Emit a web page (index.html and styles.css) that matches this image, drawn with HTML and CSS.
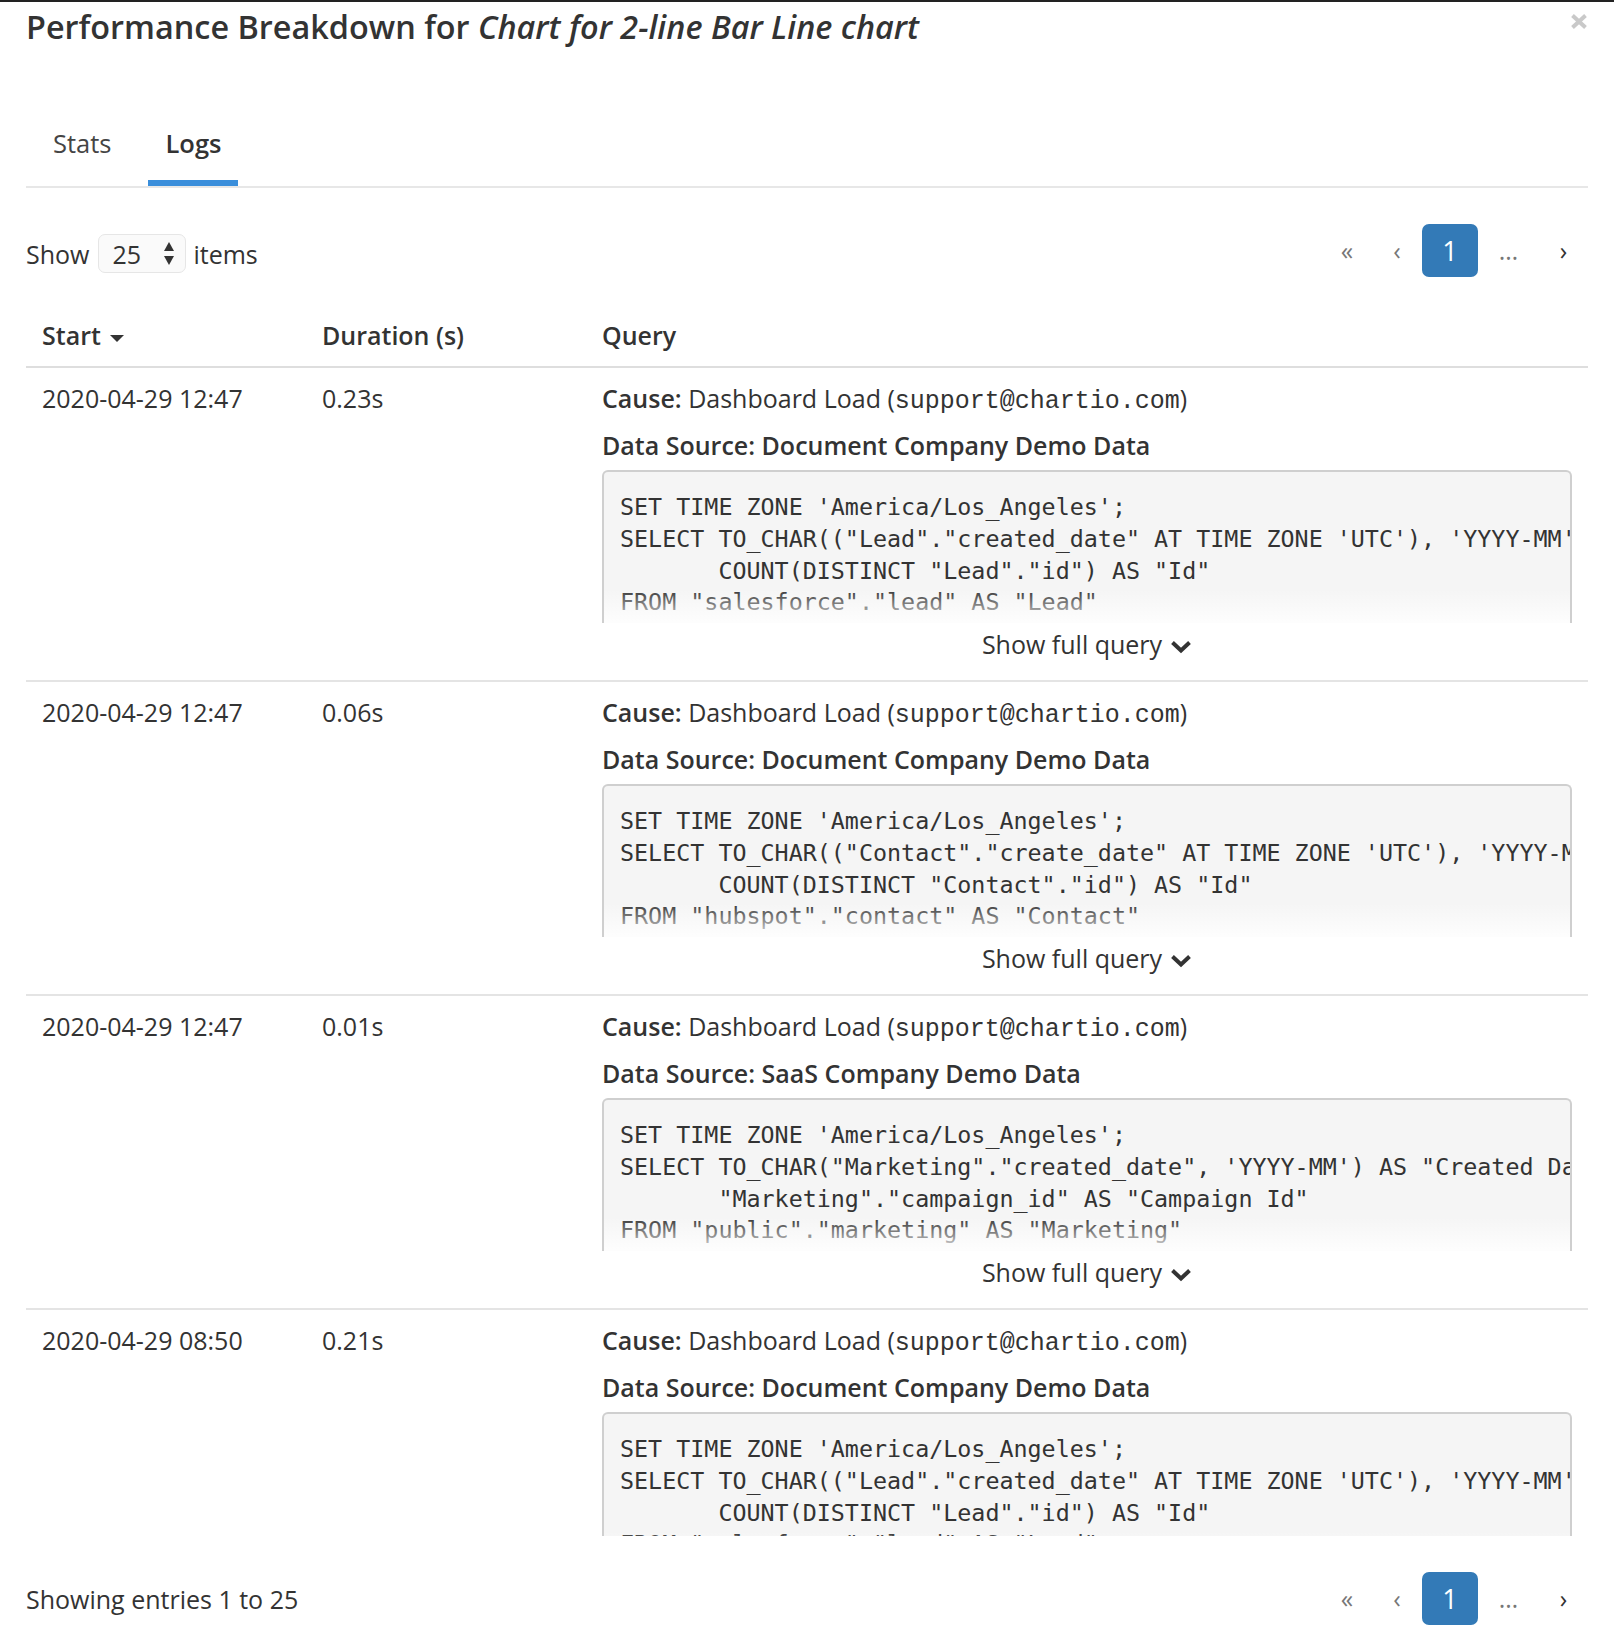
FILE: index.html
```html
<!DOCTYPE html>
<html lang="en">
<head>
<meta charset="utf-8">
<title>Performance Breakdown</title>
<link rel="stylesheet" href="styles.css">
</head>
<body>
<div class="modal">
  <span class="close" aria-label="Close"><svg width="18" height="17" viewBox="0 0 18 17"><path d="M2.5 2.5 L15.5 14.5 M15.5 2.5 L2.5 14.5" stroke="#c9c9c9" stroke-width="4" fill="none"/></svg></span>
  <h1 class="title">Performance Breakdown for <em>Chart for 2-line Bar Line chart</em></h1>

  <ul class="tabs">
    <li class="tab">Stats</li>
    <li class="tab active">Logs</li>
  </ul>

  <div class="toolbar">
    <div class="page-size">Show <span class="select">25<span class="spin"><i class="up"></i><i class="down"></i></span></span> items</div>
    <ul class="pager">
      <li class="muted p-first">&laquo;</li>
      <li class="muted p-prev">&lsaquo;</li>
      <li class="current">1</li>
      <li class="muted p-gap">&hellip;</li>
      <li class="p-next">&rsaquo;</li>
    </ul>
  </div>

  <div class="scroll">
    <table class="logs">
      <colgroup><col class="c-start"><col class="c-dur"><col></colgroup>
      <thead>
        <tr><th>Start <span class="caret"></span></th><th>Duration (s)</th><th>Query</th></tr>
      </thead>
      <tbody>
        <tr>
          <td>2020-04-29 12:47</td>
          <td>0.23s</td>
          <td>
            <div class="cause"><b>Cause:</b> Dashboard Load (<span class="email">support@chartio.com</span>)</div>
            <div class="source">Data Source: Document Company Demo Data</div>
            <div class="code"><pre>SET TIME ZONE 'America/Los_Angeles';
SELECT TO_CHAR(("Lead"."created_date" AT TIME ZONE 'UTC'), 'YYYY-MM') AS "Created Date",
       COUNT(DISTINCT "Lead"."id") AS "Id"
FROM "salesforce"."lead" AS "Lead"
WHERE ("Lead"."created_date" AT TIME ZONE 'UTC') &gt;= '2019-05-01'</pre></div>
            <div class="more">Show full query<svg class="chev" width="22" height="14" viewBox="0 0 22 14"><path d="M2.5 2.5 L11 10.5 L19.5 2.5" stroke="#333" stroke-width="4" fill="none"/></svg></div>
          </td>
        </tr>
        <tr>
          <td>2020-04-29 12:47</td>
          <td>0.06s</td>
          <td>
            <div class="cause"><b>Cause:</b> Dashboard Load (<span class="email">support@chartio.com</span>)</div>
            <div class="source">Data Source: Document Company Demo Data</div>
            <div class="code"><pre>SET TIME ZONE 'America/Los_Angeles';
SELECT TO_CHAR(("Contact"."create_date" AT TIME ZONE 'UTC'), 'YYYY-MM') AS "Create Date",
       COUNT(DISTINCT "Contact"."id") AS "Id"
FROM "hubspot"."contact" AS "Contact"
WHERE ("Contact"."create_date" AT TIME ZONE 'UTC') &gt;= '2019-05-01'</pre></div>
            <div class="more">Show full query<svg class="chev" width="22" height="14" viewBox="0 0 22 14"><path d="M2.5 2.5 L11 10.5 L19.5 2.5" stroke="#333" stroke-width="4" fill="none"/></svg></div>
          </td>
        </tr>
        <tr>
          <td>2020-04-29 12:47</td>
          <td>0.01s</td>
          <td>
            <div class="cause"><b>Cause:</b> Dashboard Load (<span class="email">support@chartio.com</span>)</div>
            <div class="source">Data Source: SaaS Company Demo Data</div>
            <div class="code"><pre>SET TIME ZONE 'America/Los_Angeles';
SELECT TO_CHAR("Marketing"."created_date", 'YYYY-MM') AS "Created Date",
       "Marketing"."campaign_id" AS "Campaign Id"
FROM "public"."marketing" AS "Marketing"
WHERE "Marketing"."created_date" &gt;= '2019-05-01'</pre></div>
            <div class="more">Show full query<svg class="chev" width="22" height="14" viewBox="0 0 22 14"><path d="M2.5 2.5 L11 10.5 L19.5 2.5" stroke="#333" stroke-width="4" fill="none"/></svg></div>
          </td>
        </tr>
        <tr>
          <td>2020-04-29 08:50</td>
          <td>0.21s</td>
          <td>
            <div class="cause"><b>Cause:</b> Dashboard Load (<span class="email">support@chartio.com</span>)</div>
            <div class="source">Data Source: Document Company Demo Data</div>
            <div class="code"><pre>SET TIME ZONE 'America/Los_Angeles';
SELECT TO_CHAR(("Lead"."created_date" AT TIME ZONE 'UTC'), 'YYYY-MM') AS "Created Date",
       COUNT(DISTINCT "Lead"."id") AS "Id"
FROM "salesforce"."lead" AS "Lead"
WHERE ("Lead"."created_date" AT TIME ZONE 'UTC') &gt;= '2019-05-01'</pre></div>
            <div class="more">Show full query<svg class="chev" width="22" height="14" viewBox="0 0 22 14"><path d="M2.5 2.5 L11 10.5 L19.5 2.5" stroke="#333" stroke-width="4" fill="none"/></svg></div>
          </td>
        </tr>
      </tbody>
    </table>
  </div>

  <div class="footer">
    <span class="entries">Showing entries 1 to 25</span>
    <ul class="pager">
      <li class="muted p-first">&laquo;</li>
      <li class="muted p-prev">&lsaquo;</li>
      <li class="current">1</li>
      <li class="muted p-gap">&hellip;</li>
      <li class="p-next">&rsaquo;</li>
    </ul>
  </div>
</div>
</body>
</html>
```

FILE: styles.css
```css
* { box-sizing: border-box; }

html, body {
  margin: 0;
  background: #fff;
}

body {
  font-family: "Open Sans", "Noto Sans", sans-serif;
  font-size: 25px;
  line-height: 38px;
  color: #333;
}

.modal {
  position: relative;
  border-top: 2px solid #222;
  padding: 0 26px;
}

.close {
  position: absolute;
  top: 11px;
  right: 26px;
  display: block;
  width: 18px;
  height: 17px;
}
.close svg { display: block; }

.title {
  margin: 0;
  padding-top: 4px;
  font-size: 32.4px;
  line-height: 40px;
  font-weight: 600;
  color: #333;
}
.title em { font-style: italic; }

.tabs {
  list-style: none;
  margin: 60px 0 0;
  padding: 0;
  display: flex;
  gap: 20px;
  border-bottom: 2px solid #e7e7e7;
}
.tab {
  padding: 18px 17px;
  font-size: 25.5px;
  line-height: 38px;
  border-bottom: 6px solid transparent;
  color: #444;
}
.tab:first-child { margin-left: 10px; }
.tab.active {
  font-weight: 600;
  color: #333;
  border-bottom-color: #3a8edb;
}

.toolbar {
  margin-top: 36px;
  display: flex;
  justify-content: space-between;
  align-items: flex-start;
}
.page-size {
  margin-top: 10px;
  height: 39px;
  display: flex;
  align-items: center;
}
.select {
  position: relative;
  display: inline-flex;
  align-items: center;
  width: 88px;
  height: 39px;
  margin: 0 7px 0 9px;
  padding-left: 13px;
  border: 1px solid #e6e6e6;
  border-radius: 7px;
  background: #fafafa;
}
.spin {
  position: absolute;
  right: 10px;
  top: 7px;
  width: 11px;
  height: 23px;
}
.spin i {
  position: absolute;
  left: 0;
  width: 0;
  height: 0;
  border-left: 5.5px solid transparent;
  border-right: 5.5px solid transparent;
}
.spin .up { top: 0; border-bottom: 9px solid #333; }
.spin .down { bottom: 0; border-top: 9px solid #333; }

.pager {
  list-style: none;
  margin: 0;
  padding: 0;
  display: flex;
}
.pager li {
  height: 53px;
  line-height: 53px;
  text-align: center;
  color: #333;
}
.pager .p-first { width: 50px; }
.pager .p-prev { width: 50px; }
.pager .p-gap { width: 61px; }
.pager .p-next { width: 49px; }
.pager li.muted { color: #777; }
.pager li.current {
  width: 56px;
  background: #337ab7;
  color: #fff;
  border-radius: 7px;
  font-size: 27px;
}

.scroll {
  margin-top: 23px;
  height: 1236px;
  overflow: hidden;
}

.logs {
  width: 100%;
  table-layout: fixed;
  border-collapse: collapse;
}
.c-start, .c-dur { width: 280px; }

.logs th {
  text-align: left;
  font-weight: 600;
  padding: 16px 16px 12px;
  line-height: 38px;
  border-bottom: 2px solid #dedede;
}
.caret {
  display: inline-block;
  margin-left: 3px;
  vertical-align: middle;
  width: 0;
  height: 0;
  border-left: 7px solid transparent;
  border-right: 7px solid transparent;
  border-top: 7px solid #333;
}

.logs td {
  vertical-align: top;
  padding: 11px 16px 17px;
  line-height: 38px;
  border-bottom: 2px solid #e4e4e4;
}

.cause, .source, .more {
  height: 38px;
  white-space: nowrap;
}
.cause b { font-weight: 600; }
.email {
  font-family: "Liberation Mono", "DejaVu Sans Mono", monospace;
  font-size: 25px;
  line-height: 1;
}
.source {
  margin-top: 9px;
  font-weight: 600;
}

.code {
  position: relative;
  margin-top: 6px;
  height: 153px;
  overflow: hidden;
  background: #f5f5f5;
  border: 2px solid #cfcfcf;
  border-bottom: 0;
  border-radius: 6px 6px 0 0;
}
.code pre {
  margin: 0;
  padding: 20px 16px;
  font-family: "DejaVu Sans Mono", "Liberation Mono", monospace;
  font-size: 23.35px;
  line-height: 31.8px;
  color: #333;
  white-space: pre;
}
.code::after {
  content: "";
  position: absolute;
  left: 0;
  right: 0;
  bottom: 0;
  height: 34px;
  background: linear-gradient(rgba(255,255,255,0), rgba(255,255,255,0.85));
}

.more {
  margin-top: 2px;
  text-align: center;
}
.chev {
  display: inline-block;
  margin-left: 8px;
  vertical-align: middle;
}

.footer {
  margin-top: 36px;
  display: flex;
  justify-content: space-between;
  align-items: center;
}
```
